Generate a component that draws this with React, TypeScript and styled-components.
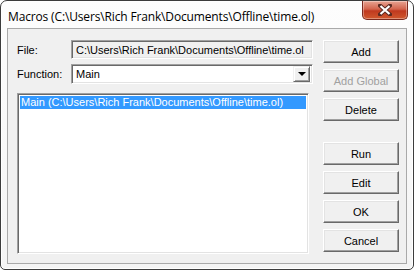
import styled, { createGlobalStyle } from "styled-components";

const GlobalStyle = createGlobalStyle`
  body {
    margin: 0;
    background: #ffffff;
  }
`;

const Window = styled.div`
  box-sizing: border-box;
  width: 414px;
  height: 270px;
  display: flex;
  flex-direction: column;
  border: 1px solid #3c3c3c;
  border-radius: 7px 7px 5px 5px;
  background: linear-gradient(#fdfdfd, #f4f4f4);
  box-shadow: inset 0 0 0 1px #ffffff;
  overflow: hidden;
`;

const TitleBar = styled.div`
  display: flex;
  align-items: flex-start;
  height: 27px;
  padding-left: 7px;
`;

const Title = styled.span`
  margin-top: 7px;
  font-family: "Open Sans", "Liberation Sans", sans-serif;
  font-size: 12px;
  color: #000;
  letter-spacing: -0.15px;
`;

const CloseButton = styled.div`
  margin-left: auto;
  margin-right: 5px;
  width: 46px;
  height: 19px;
  box-sizing: border-box;
  display: flex;
  align-items: center;
  justify-content: center;
  border: 1px solid #7b2a1f;
  border-top: none;
  border-radius: 0 0 5px 5px;
  background: linear-gradient(#e8a493 0%, #d3644d 45%, #c0391f 55%, #d0582e 100%);
  box-shadow: inset 0 0 0 1px rgba(255, 255, 255, 0.35);
`;

const Client = styled.div`
  flex: 1;
  margin: 0 6px 5px 6px;
  display: flex;
  padding: 11px 0 0 9px;
  background: #f0f0f0;
  border: 1px solid #a9a9a9;
  font-family: "Liberation Sans", Arial, sans-serif;
  font-size: 11px;
  color: #000;
`;

const LeftColumn = styled.div`
  width: 296px;
  display: flex;
  flex-direction: column;
`;

const FieldRow = styled.div<{ $gap?: number }>`
  display: flex;
  align-items: center;
  margin-top: ${(p) => p.$gap ?? 0}px;
`;

const Label = styled.span`
  width: 54px;
  flex: none;
`;

const Sunken = styled.div<{ $bg: string }>`
  box-sizing: border-box;
  border-style: solid;
  border-width: 1px;
  border-color: #a0a0a0 #ffffff #ffffff #a0a0a0;
  box-shadow: inset 1px 1px 0 #696969, inset -1px -1px 0 #e3e3e3;
  background: ${(p) => p.$bg};
`;

const TextField = styled(Sunken)`
  flex: 1;
  height: 19px;
  padding: 0 4px;
  display: flex;
  align-items: center;
  white-space: nowrap;
  overflow: hidden;
`;

const Combo = styled(Sunken)`
  flex: 1;
  height: 20px;
  padding: 0 2px 0 4px;
  display: flex;
  align-items: center;
  justify-content: space-between;
`;

const DropButton = styled.div`
  box-sizing: border-box;
  width: 17px;
  height: 16px;
  display: flex;
  align-items: center;
  justify-content: center;
  background: #f0f0f0;
  border-style: solid;
  border-width: 1px;
  border-color: #f0f0f0 #696969 #696969 #f0f0f0;
  box-shadow: inset 1px 1px 0 #ffffff, inset -1px -1px 0 #a0a0a0;
`;

const Arrow = styled.span`
  width: 0;
  height: 0;
  border-left: 4px solid transparent;
  border-right: 4px solid transparent;
  border-top: 4px solid #000;
`;

const ListBox = styled(Sunken)`
  width: 292px;
  height: 161px;
  margin-top: 9px;
  padding: 2px;
`;

const ListItem = styled.div<{ $selected?: boolean }>`
  height: 13px;
  line-height: 13px;
  padding-left: 1px;
  white-space: nowrap;
  background: ${(p) => (p.$selected ? "#3399ff" : "transparent")};
  color: ${(p) => (p.$selected ? "#ffffff" : "#000000")};
`;

const ButtonColumn = styled.div`
  margin-left: 10px;
  display: flex;
  flex-direction: column;
  gap: 6px;
`;

const Button = styled.div<{ $disabled?: boolean; $spaced?: boolean }>`
  box-sizing: border-box;
  width: 76px;
  height: 23px;
  display: flex;
  align-items: center;
  justify-content: center;
  margin-top: ${(p) => (p.$spaced ? 15 : 0)}px;
  background: #f0f0f0;
  border-style: solid;
  border-width: 1px;
  border-color: #ffffff #696969 #696969 #ffffff;
  box-shadow: inset -1px -1px 0 #a0a0a0, inset 1px 1px 0 #e3e3e3;
  color: ${(p) => (p.$disabled ? "#a0a0a0" : "#000000")};
`;

const path = "C:\\Users\\Rich Frank\\Documents\\Offline\\time.ol";

export default function App() {
  return (
    <>
      <GlobalStyle />
      <Window>
        <TitleBar>
          <Title>Macros ({path})</Title>
          <CloseButton>
            <svg width="14" height="12" viewBox="0 0 14 12">
              <path
                d="M2 1.5 L12 10.5 M12 1.5 L2 10.5"
                stroke="#5a2a22"
                strokeWidth="4"
                strokeLinecap="square"
              />
              <path
                d="M2.5 2 L11.5 10 M11.5 2 L2.5 10"
                stroke="#ffffff"
                strokeWidth="2.2"
              />
            </svg>
          </CloseButton>
        </TitleBar>
        <Client>
          <LeftColumn>
            <FieldRow>
              <Label>File:</Label>
              <TextField $bg="#f0f0f0">{path}</TextField>
            </FieldRow>
            <FieldRow $gap={5}>
              <Label>Function:</Label>
              <Combo $bg="#ffffff">
                <span>Main</span>
                <DropButton>
                  <Arrow />
                </DropButton>
              </Combo>
            </FieldRow>
            <ListBox $bg="#ffffff">
              <ListItem $selected>Main ({path})</ListItem>
            </ListBox>
          </LeftColumn>
          <ButtonColumn>
            <Button>Add</Button>
            <Button $disabled>Add Global</Button>
            <Button>Delete</Button>
            <Button $spaced>Run</Button>
            <Button>Edit</Button>
            <Button>OK</Button>
            <Button>Cancel</Button>
          </ButtonColumn>
        </Client>
      </Window>
    </>
  );
}
